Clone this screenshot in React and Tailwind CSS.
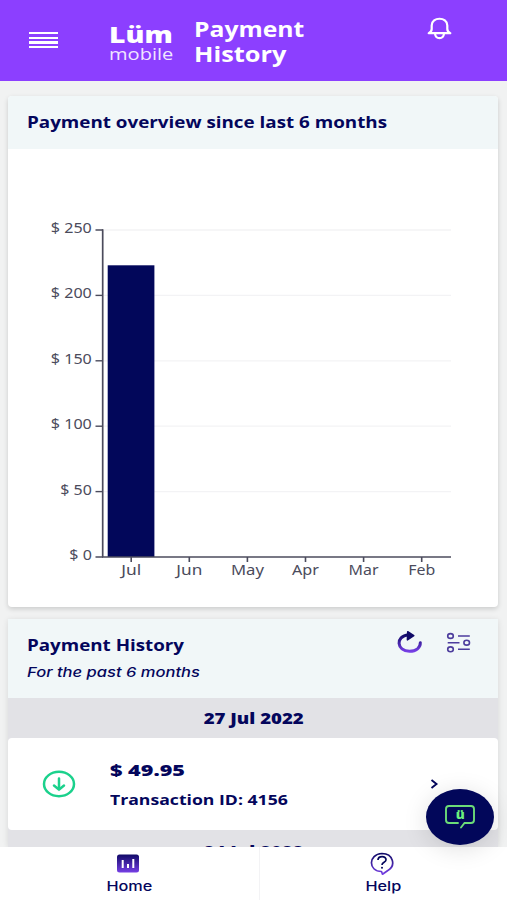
import React from "react";

const NAVY = "#04065c";
const yTicks = [250, 200, 150, 100, 50, 0];
const months = ["Jul", "Jun", "May", "Apr", "Mar", "Feb"];

function Chart() {
  return (
    <svg width="490" height="458" viewBox="8 149 490 458" className="block" fontFamily="'Noto Sans', sans-serif" fill="#4b4b5c">
      {yTicks.map((v, i) => {
        const y = 230 + i * 65.4;
        const label = "$ " + v;
        const width = v >= 100 ? 41 : v ? 31.5 : 22.5;
        return (
          <g key={v}>
            {v > 0 && <path d={`M104 ${y}H451`} stroke="#f3f3f5" strokeWidth="1.3" />}
            <path d={`M95.500 ${y}H103`} stroke="#4b4b5c" strokeWidth="1.4" />
            <text x={91.8 - width} y={y + 3} fontSize="14" textLength={width} lengthAdjust="spacingAndGlyphs">{label}</text>
          </g>
        );
      })}
      <rect x="107.700" y="265.300" width="46.700" height="291.700" fill="#02075a" />
      <path d="M102.700 229.300V557" stroke="#4b4b5c" strokeWidth="1.700" />
      <path d="M102 557H451" stroke="#4b4b5c" strokeWidth="1.400" />
      {months.map((m, i) => {
        const x = 131.2 + i * 58.1;
        const width = [20, 26, 33, 27, 30, 27][i];
        return (
          <g key={m}>
            <path d={`M${x} 557V562`} stroke="#4b4b5c" strokeWidth="1.600" />
            <text x={x - width / 2} y="575" fontSize="13.500" textLength={width} lengthAdjust="spacingAndGlyphs">{m}</text>
          </g>
        );
      })}
    </svg>
  );
}

function Header() {
  return (
    <header className="flex h-[81px] shrink-0 items-start bg-[#8c3fff] font-['Open_Sans',sans-serif] text-white">
      <div className="ml-[29px] mt-8 flex w-[29px] flex-col gap-[2.500px]">
        <i className="h-[2.200px] bg-white" />
        <i className="h-[2.200px] bg-white" />
        <i className="h-[2.200px] bg-white" />
        <i className="h-[2.200px] bg-white" />
      </div>
      <div className="ml-[51px] mt-[24px] w-[85px] whitespace-nowrap">
        <div className="origin-left scale-x-[1.23] text-[23px] leading-[21px] font-extrabold">Lüm</div>
        <div className="origin-left scale-x-[1.18] text-[17px] leading-[17px] font-normal text-[#f1e6ff]">mobile</div>
      </div>
      <h1 className="mt-[16px] w-[233px] text-[22px] leading-[25px] font-bold">
        <span className="block origin-left scale-x-[1.122]">Payment</span>
        <span className="block origin-left scale-x-[1.152]">History</span>
      </h1>
      <svg width="25" height="24" viewBox="427 16 25 24" fill="none" stroke="white" strokeWidth="2.200" strokeLinejoin="round" className="mt-4">
        <path d="M428.700 33.200Q431.700 31.800 431.700 29V25.500C431.700 16.500 447.300 16.500 447.300 25.500V29Q447.300 31.800 450.300 33.200Z" />
        <path d="M435 33.500Q435.500 38.200 439.500 38.200Q443.500 38.200 444 33.500" />
      </svg>
    </header>
  );
}

function PaymentHistory() {
  return (
    <section className="mx-2 mt-3 mr-[9px] flex flex-1 flex-col overflow-hidden bg-[#e2e2e6] shadow-[0_1px_6px_rgba(0,0,0,0.11)]">
      <div className="flex h-[79px] shrink-0 bg-[#f1f7f8] pl-[19px]">
        <div className="w-[369px] pt-[14px] whitespace-nowrap">
          <h2 className="origin-left scale-x-[1.137] text-[16.500px] leading-6 font-bold">Payment History</h2>
          <p className="mt-[3px] origin-left scale-x-[1.225] font-[Inter,sans-serif] text-[13.500px] leading-6 italic font-medium">For the past 6 months</p>
        </div>
        <svg width="76" height="28" viewBox="396 629 76 28" fill="none" className="mt-[10px]">
          <defs>
            <linearGradient id="ink" x1="0" y1="0" x2="0" y2="1">
              <stop stopColor="#100a67" />
              <stop offset="1" stopColor="#763fe5" />
            </linearGradient>
          </defs>
          <path d="M408.500 634.700C395 636 396.500 651.300 409.500 651.300C416.300 651.300 420.600 647.500 420.300 642.700" stroke="url(#ink)" strokeWidth="3" strokeLinecap="round" />
          <path d="M407.700 631.700L413.800 635.700L407.400 639.900Z" fill="#100a67" stroke="#100a67" strokeWidth="1.500" strokeLinejoin="round" />
          <g stroke="#4d3d9d" strokeWidth="1.600">
            <ellipse cx="450.500" cy="636" rx="2.800" ry="2.400" />
            <ellipse cx="466.700" cy="642.700" rx="2.800" ry="2.400" />
            <ellipse cx="450.500" cy="649.300" rx="2.800" ry="2.400" />
            <path d="M458 636H469.800M447.700 642.700H459.500M458 649.300H469.800" />
          </g>
        </svg>
      </div>
      <div className="h-10 shrink-0 pl-px text-center text-[15.500px] leading-[40px] font-extrabold">
        <span className="inline-block scale-x-[1.2]">27 Jul 2022</span>
      </div>
      <div className="flex h-[92px] shrink-0 items-start rounded bg-white">
        <svg width="36" height="30" viewBox="41 769 36 30" fill="none" stroke="#1bd18c" strokeWidth="2.500" strokeLinecap="round" className="mt-[31px] ml-[33px]">
          <ellipse cx="59" cy="784" rx="15" ry="12.200" />
          <path d="M59 778.500V789.500M54 785.500L59 789.700L64 785.500" />
        </svg>
        <div className="ml-[33px] w-[319px] pt-[20px] whitespace-nowrap">
          <div className="origin-left scale-x-[1.31] text-[16.500px] leading-6 font-extrabold">$ 49.95</div>
          <div className="mt-[5px] origin-left scale-x-[1.175] text-[15px] leading-6 font-bold">Transaction ID: 4156</div>
        </div>
        <svg width="10" height="12" viewBox="429 778 10 12" fill="none" stroke={NAVY} strokeWidth="1.900" className="mt-10">
          <path d="M431.500 780L436.500 784L431.500 788" />
        </svg>
      </div>
      <div className="h-[17px] shrink-0 overflow-hidden pl-px text-center text-[15.500px] leading-[43px] font-extrabold">
        <span className="inline-block scale-x-[1.2]">24 Jul 2022</span>
      </div>
    </section>
  );
}

function Footer() {
  return (
    <footer className="flex h-[53px] shrink-0 bg-white font-[Inter,sans-serif] text-[13px] leading-4 font-medium">
      <div className="flex w-[260px] flex-col items-center border-r border-[#f3f3f5] pt-[7px]">
        <svg width="22" height="19" viewBox="0 0 22 19" className="-ml-[3px]">
          <rect y="0.500" width="22" height="18" rx="2.500" fill="url(#ink)" />
          <path d="M5.700 6V14M11 10V14M16.300 5V14" stroke="white" strokeWidth="2" />
        </svg>
        <span className="mt-[5px] scale-x-[1.25]">Home</span>
      </div>
      <div className="flex w-[246px] flex-col items-center pt-[4px]">
        <svg width="24" height="24" viewBox="370 851 24 24" fill="none" stroke="url(#ink)" strokeWidth="1.700" strokeLinejoin="round" className="-ml-[2px]">
          <path d="M382 853.500C368 854 368 871.500 381.500 871.500L382.500 874.300L387.500 870.700C396.500 865.500 393 853.500 382 853.500Z" />
          <path d="M378 860C378 855.500 386.500 855.500 386 860C385.700 862.500 382 862 382 865" stroke={NAVY} />
          <circle cx="382" cy="867.800" r="1" fill={NAVY} stroke="none" />
        </svg>
        <span className="mt-[3px] scale-x-[1.25]">Help</span>
      </div>
    </footer>
  );
}

export default function App() {
  return (
    <main className="relative flex h-[900px] w-[507px] flex-col overflow-hidden bg-[#f1f2f2] font-['Open_Sans',sans-serif] text-[#04065c]">
      <Header />
      <section className="mx-2 mt-[15px] mr-[9px] h-[511px] shrink-0 overflow-hidden rounded bg-white shadow-[0_2px_5px_rgba(0,0,0,0.16)]">
        <div className="h-[53px] bg-[#f1f7f8] pt-[14px] pl-[19px] whitespace-nowrap">
          <h2 className="origin-left scale-x-[1.14] text-[16.500px] leading-6 font-bold">Payment overview since last 6 months</h2>
        </div>
        <Chart />
      </section>
      <PaymentHistory />
      <Footer />
      <button className="absolute top-[789px] left-[426px] flex h-[56px] w-[68px] items-center justify-center rounded-[50%] bg-[#02075a] shadow-[0_4px_24px_rgba(0,0,0,0.13)]">
        <svg width="32" height="26" viewBox="444 804 32 26" fill="none" stroke="#6cdc78" strokeWidth="1.900" strokeLinecap="round">
          <path d="M458 823H449Q446 823 446 820V809Q446 806 449 806H471Q474 806 474 809V820Q474 823 471 823H464.500L461 827.500" />
          <text x="455.700" y="819" fill="#6cf07e" stroke="none" fontFamily="'Open Sans', sans-serif" fontWeight="800" fontSize="13" textLength="9" lengthAdjust="spacingAndGlyphs">ü</text>
        </svg>
      </button>
    </main>
  );
}
